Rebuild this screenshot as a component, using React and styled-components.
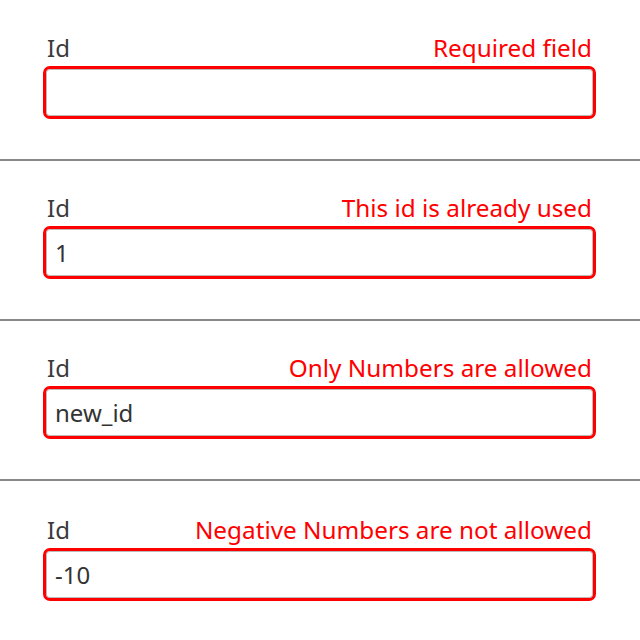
import React from "react";
import styled, { createGlobalStyle } from "styled-components";

const Global = createGlobalStyle`
  body {
    margin: 0;
    background: #fff;
    font-family: "Noto Sans", "Liberation Sans", sans-serif;
  }
`;

const Page = styled.div`
  width: 640px;
  padding-top: 1px;
`;

const Section = styled.div`
  height: 160px;
  box-sizing: border-box;
  padding: 0 44px 0 43px;
  display: flex;
  flex-direction: column;
  justify-content: flex-end;
  padding-bottom: 40px;
  border-bottom: ${(p) => (p.$last ? "none" : "2px solid #888")};
`;

const LabelRow = styled.div`
  display: flex;
  justify-content: space-between;
  align-items: baseline;
  padding: 0 4px;
  height: 32px;
  line-height: 32px;
  margin-bottom: 2px;
`;

const Label = styled.span`
  font-size: 24px;
  color: #3a3a3a;
`;

const Error = styled.span`
  font-size: 24.3px;
  color: #f00;
`;

const Input = styled.div`
  height: 53px;
  box-sizing: border-box;
  border: 3px solid #f00;
  border-radius: 7px;
  box-shadow: inset 0 0 0 1px #bbb;
  display: flex;
  align-items: center;
  padding: 0 9px;
  font-size: 24px;
  color: #333;
`;

const fields = [
  { error: "Required field", value: "" },
  { error: "This id is already used", value: "1" },
  { error: "Only Numbers are allowed", value: "new_id" },
  { error: "Negative Numbers are not allowed", value: "-10" },
];

export default function App() {
  return (
    <Page>
      <Global />
      {fields.map((f, i) => (
        <Section key={i} $last={i === fields.length - 1}>
          <LabelRow>
            <Label>Id</Label>
            <Error>{f.error}</Error>
          </LabelRow>
          <Input>{f.value}</Input>
        </Section>
      ))}
    </Page>
  );
}
